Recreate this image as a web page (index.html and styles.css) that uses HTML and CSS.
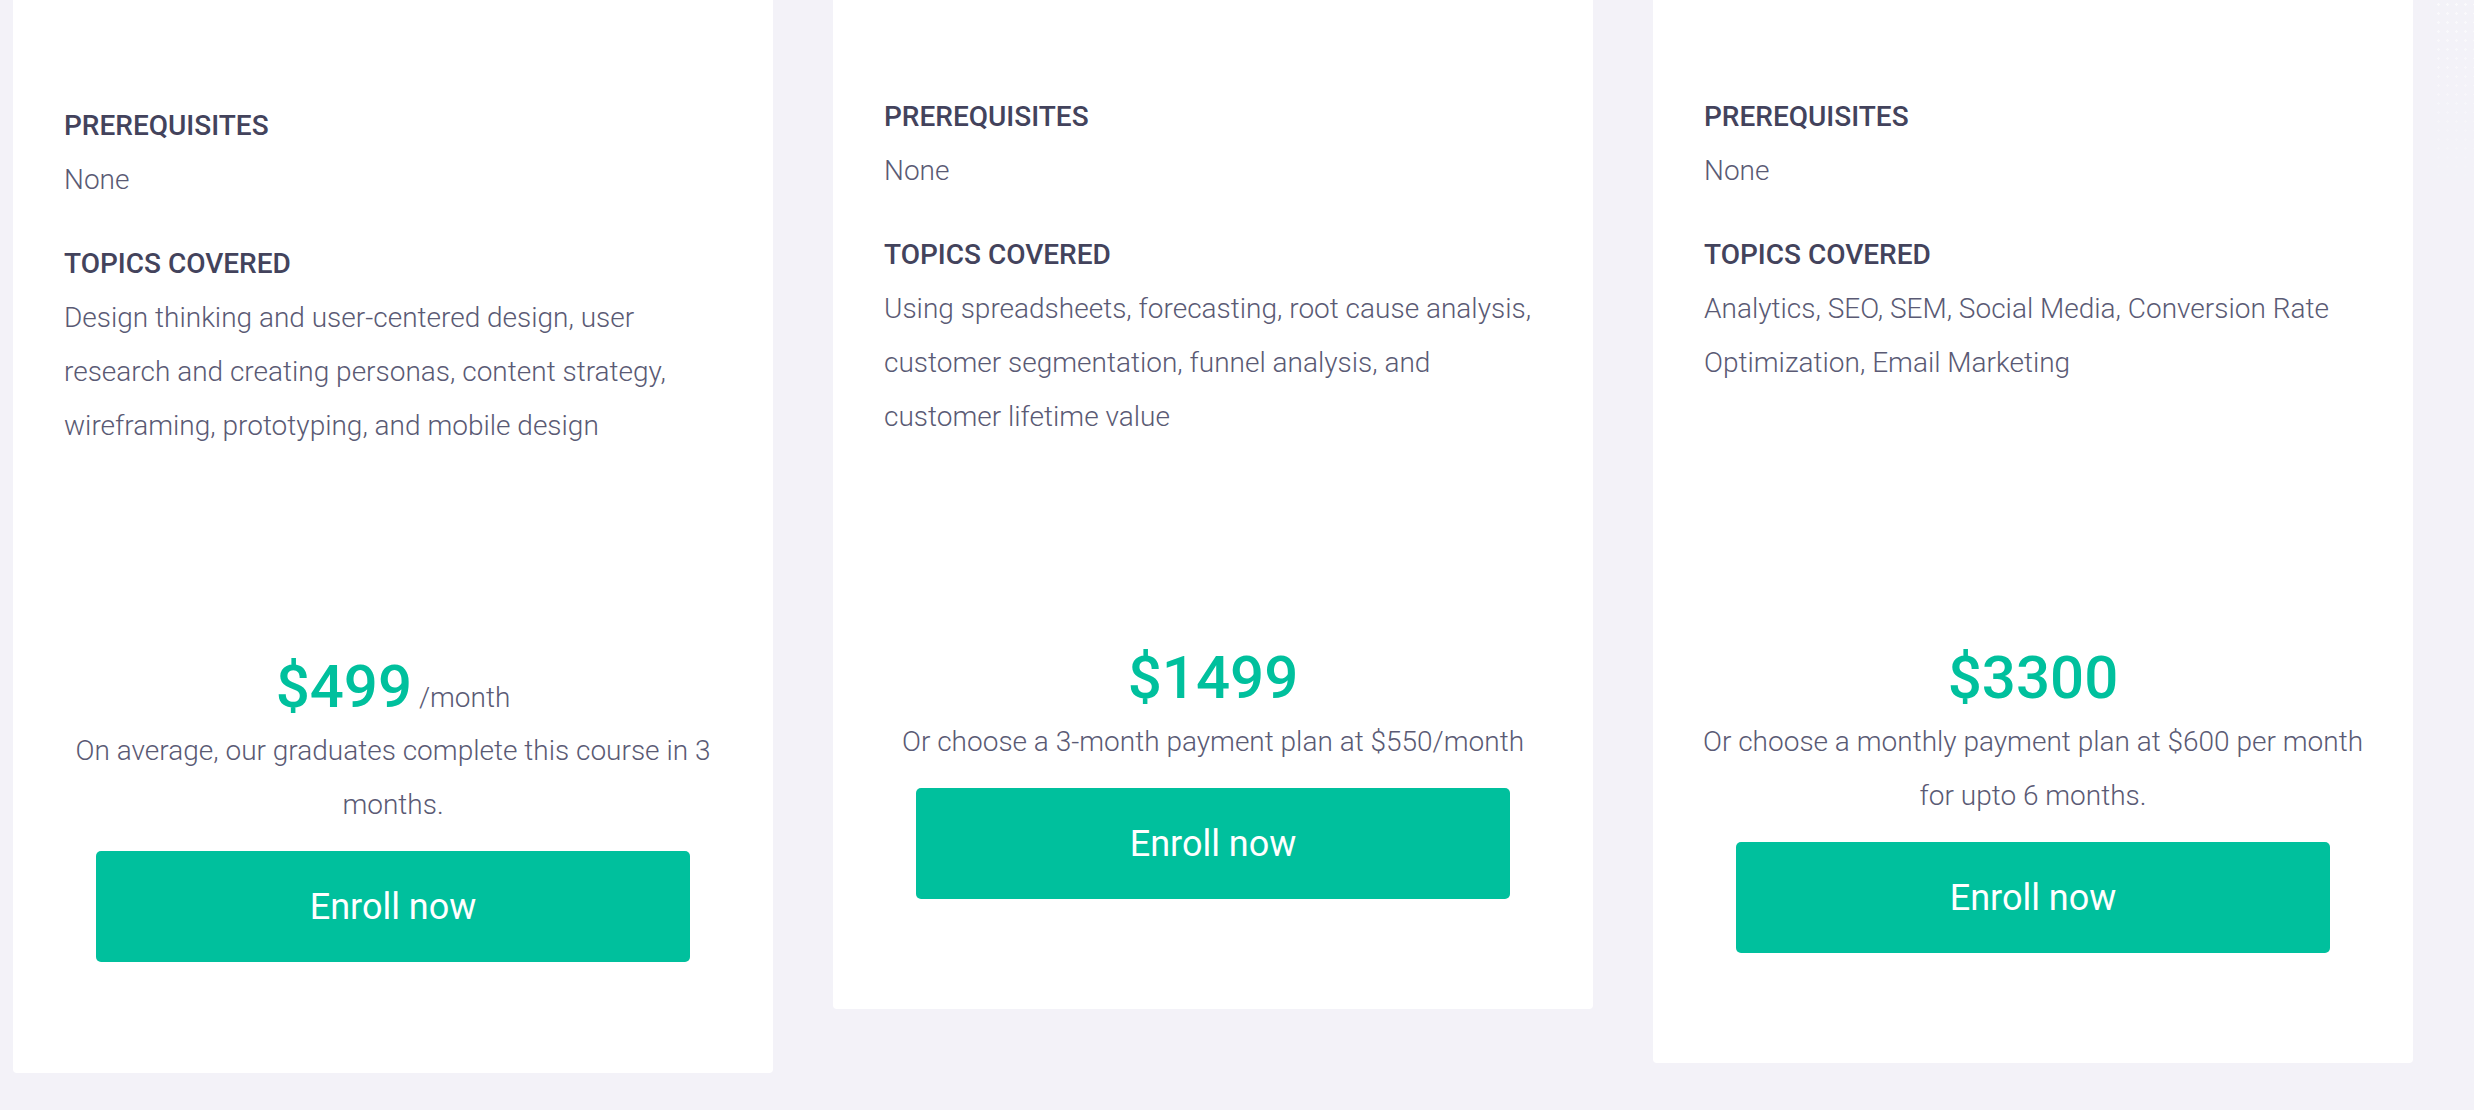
FILE: index.html
```html
<!DOCTYPE html>
<html lang="en">
<head>
  <meta charset="UTF-8" />
  <meta name="viewport" content="width=device-width, initial-scale=1.0"/>
  <title>Courses - Pricing</title>
  <link rel="stylesheet" href="styles.css">
</head>
<body>

  <div class="dots"></div>

  <div class="courses">

    <div class="card card-first">
      <div class="info">
        <h4>Prerequisites</h4>
        <p>None</p>
        <h4>Topics covered</h4>
        <p>Design thinking and user-centered design, user research and creating personas, content strategy, wireframing, prototyping, and mobile design</p>
      </div>
      <div class="price">$499<span class="per"> /month</span></div>
      <p class="note">On average, our graduates complete this course in 3 months.</p>
      <button class="enroll">Enroll now</button>
    </div>

    <div class="card">
      <div class="info">
        <h4>Prerequisites</h4>
        <p>None</p>
        <h4>Topics covered</h4>
        <p>Using spreadsheets, forecasting, root cause analysis, customer segmentation, funnel analysis, and customer lifetime value</p>
      </div>
      <div class="price">$1499</div>
      <p class="note">Or choose a 3-month payment plan at $550/month</p>
      <button class="enroll">Enroll now</button>
    </div>

    <div class="card">
      <div class="info">
        <h4>Prerequisites</h4>
        <p>None</p>
        <h4>Topics covered</h4>
        <p>Analytics, SEO, SEM, Social Media, Conversion Rate Optimization, Email Marketing</p>
      </div>
      <div class="price">$3300</div>
      <p class="note">Or choose a monthly payment plan at $600 per month for upto 6 months.</p>
      <button class="enroll">Enroll now</button>
    </div>

  </div>

</body>
</html>
```

FILE: styles.css
```css
body {
  font-family: Roboto, "Noto Sans", sans-serif;
  background: #f3f2f8;
  margin: 0;
  padding: 0;
  min-height: 1110px;
  overflow: hidden;
}

/* faint dotted decoration on the right edge */
.dots {
  position: absolute;
  top: 0;
  right: 0;
  width: 40px;
  height: 200px;
  background-image: radial-gradient(circle, rgba(255,255,255,0.6) 1px, transparent 1.5px);
  background-size: 9px 9px;
  -webkit-mask-image: linear-gradient(to bottom, #000, transparent);
  mask-image: linear-gradient(to bottom, #000, transparent);
}

.courses {
  display: flex;
  align-items: flex-start;
  gap: 60px;
  padding-left: 13px;
}

.card {
  width: 760px;
  flex-shrink: 0;
  box-sizing: border-box;
  padding: 90px 51px 110px;
  background: #fff;
  border-radius: 0 0 4px 4px;
}
.card-first {
  padding-top: 99px;
  padding-bottom: 111px;
}

.info {
  height: 551px;
}
.info h4 {
  margin: 0;
  font-size: 28px;
  line-height: 54px;
  font-weight: 500;
  text-transform: uppercase;
  color: #43435c;
}
.info p {
  margin: 0 0 30px;
  font-size: 28px;
  line-height: 54px;
  font-weight: 300;
  color: #5a5a74;
}

.price {
  text-align: center;
  font-size: 60px;
  line-height: 74px;
  font-weight: 500;
  color: #00c09d;
}
.price .per {
  font-size: 28px;
  line-height: 1;
  font-weight: 300;
  color: #5a5a74;
}

.note {
  margin: 0 -8px;
  text-align: center;
  font-size: 28px;
  line-height: 54px;
  font-weight: 300;
  color: #5a5a74;
}

.enroll {
  display: block;
  width: 594px;
  height: 111px;
  margin: 19px auto 0;
  border: none;
  border-radius: 5px;
  background: #00c09d;
  color: #fff;
  font-family: Roboto, "Noto Sans", sans-serif;
  font-size: 36px;
  font-weight: 400;
  cursor: pointer;
}
.enroll:hover {
  background: #00ad8d;
}
```
